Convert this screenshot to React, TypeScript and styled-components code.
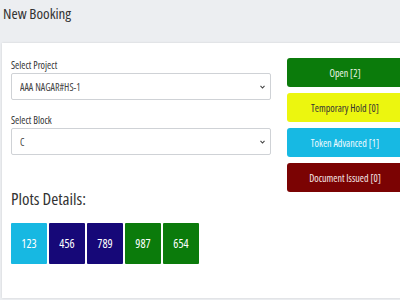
import React from "react";
import styled, { createGlobalStyle } from "styled-components";

const Global = createGlobalStyle`
  html, body { margin: 0; padding: 0; background: #eceef1; overflow: hidden; }
  body { font-family: "Open Sans", "Noto Sans", sans-serif; font-stretch: 75%; color: #333; }
  * { box-sizing: border-box; }
`;

const Page = styled.div`
  width: 400px;
  height: 300px;
  overflow: hidden;
  background: #eceef1;
`;

const Header = styled.div`
  height: 43px;
  padding: 3px 0 0 3px;
`;

const Title = styled.h1`
  margin: 0;
  font-size: 15px;
  line-height: 20px;
  font-weight: 500;
  color: #333;
`;

const Card = styled.div`
  margin-left: 2px;
  width: 430px;
  height: 255px;
  background: #fff;
  box-shadow: 0 0 2px rgba(0, 0, 0, 0.12);
  padding: 16px 0 0 9px;
  display: flex;
  align-items: flex-start;
`;

const LeftCol = styled.div`
  width: 260px;
  display: flex;
  flex-direction: column;
`;

const RightCol = styled.div`
  width: 116px;
  margin-left: 16px;
  margin-top: -1px;
  display: flex;
  flex-direction: column;
  gap: 6px;
`;

const Field = styled.div<{ $mb?: number }>`
  display: flex;
  flex-direction: column;
  margin-bottom: ${(p) => p.$mb ?? 0}px;
`;

const Label = styled.label`
  font-size: 10px;
  line-height: 13px;
  margin-bottom: 1px;
  color: #333;
`;

const SelectWrap = styled.div`
  position: relative;
  height: 27px;
`;

const Select = styled.select`
  appearance: none;
  -webkit-appearance: none;
  width: 100%;
  height: 27px;
  border: 1px solid #cfd2d6;
  border-radius: 2px;
  background: #fff;
  padding: 0 0 0 8px;
  font-family: inherit;
  font-stretch: 75%;
  font-size: 10px;
  color: #444;
  outline: none;
`;

const Chevron = styled.svg`
  position: absolute;
  right: 6px;
  top: 12px;
  width: 5px;
  height: 4px;
  pointer-events: none;
`;

const PlotsTitle = styled.h2`
  margin: 33px 0 0 0;
  font-size: 17px;
  line-height: 22px;
  font-weight: 400;
  color: #333;
`;

const Plots = styled.div`
  margin-top: 13px;
  display: flex;
  gap: 2px;
`;

const Plot = styled.div<{ $bg: string }>`
  width: 36px;
  height: 41px;
  background: ${(p) => p.$bg};
  border-radius: 1px;
  color: #fff;
  font-size: 12px;
  display: flex;
  align-items: center;
  justify-content: center;
`;

const StatusButton = styled.button<{ $bg: string; $fg: string }>`
  height: 29px;
  width: 100%;
  border: none;
  border-radius: 3px;
  background: ${(p) => p.$bg};
  color: ${(p) => p.$fg};
  font-family: inherit;
  font-stretch: 75%;
  font-size: 10px;
  padding: 0;
  cursor: pointer;
`;

const ChevronIcon = () => (
  <Chevron viewBox="0 0 5 4">
    <path d="M0.5 0.8 L2.5 3 L4.5 0.8" fill="none" stroke="#444" strokeWidth="1.1" />
  </Chevron>
);

const plots = [
  { n: "123", c: "#17b8e2" },
  { n: "456", c: "#160878" },
  { n: "789", c: "#160878" },
  { n: "987", c: "#0b7b0b" },
  { n: "654", c: "#0b7b0b" },
];

const statuses = [
  { t: "Open [2]", bg: "#0b7b0b", fg: "#eef6e8" },
  { t: "Temporary Hold [0]", bg: "#ecf60f", fg: "#333" },
  { t: "Token Advanced [1]", bg: "#17b9e3", fg: "#f2fbff" },
  { t: "Document Issued [0]", bg: "#7b0303", fg: "#f6e8e8" },
];

export default function App() {
  return (
    <Page>
      <Global />
      <Header>
        <Title>New Booking</Title>
      </Header>
      <Card>
        <LeftCol>
          <Field $mb={14}>
            <Label>Select Project</Label>
            <SelectWrap>
              <Select defaultValue="hs1">
                <option value="hs1">AAA NAGAR#HS-1</option>
              </Select>
              <ChevronIcon />
            </SelectWrap>
          </Field>
          <Field>
            <Label>Select Block</Label>
            <SelectWrap>
              <Select defaultValue="c">
                <option value="c">C</option>
              </Select>
              <ChevronIcon />
            </SelectWrap>
          </Field>
          <PlotsTitle>Plots Details:</PlotsTitle>
          <Plots>
            {plots.map((p) => (
              <Plot key={p.n} $bg={p.c}>
                {p.n}
              </Plot>
            ))}
          </Plots>
        </LeftCol>
        <RightCol>
          {statuses.map((s) => (
            <StatusButton key={s.t} $bg={s.bg} $fg={s.fg}>
              {s.t}
            </StatusButton>
          ))}
        </RightCol>
      </Card>
    </Page>
  );
}
